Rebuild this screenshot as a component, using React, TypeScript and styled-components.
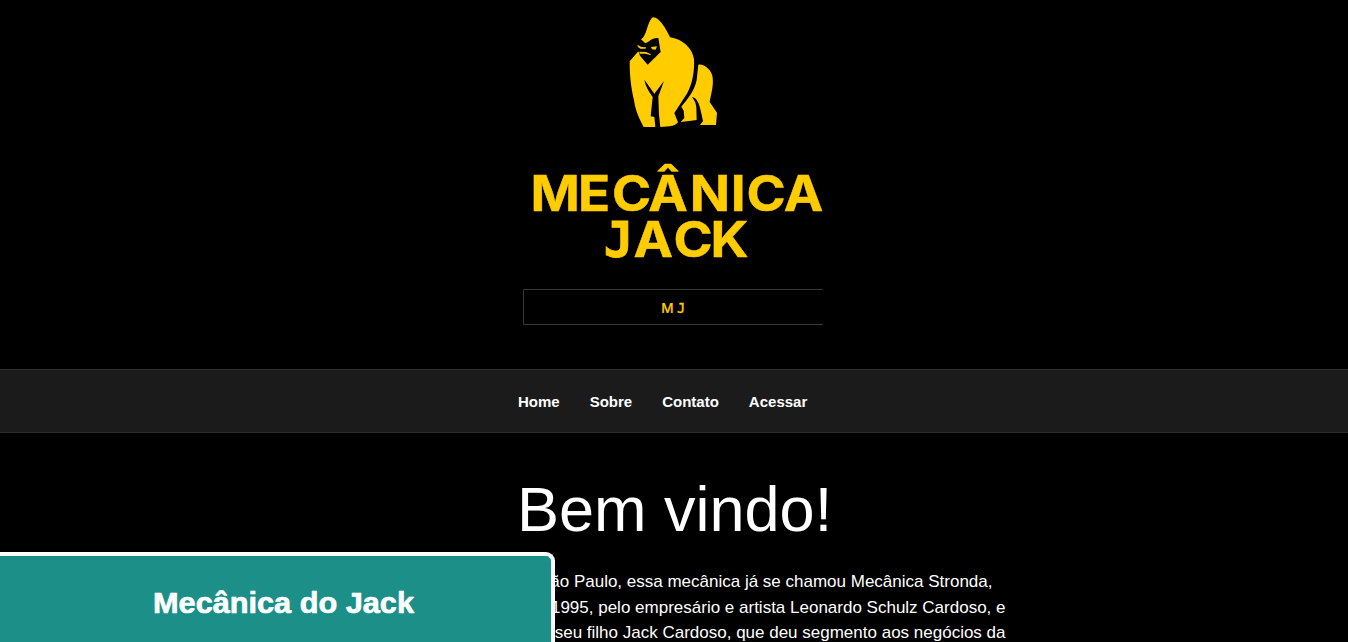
import React from "react";
import styled, { createGlobalStyle } from "styled-components";

const GlobalStyle = createGlobalStyle`
  * { box-sizing: border-box; }
  html, body { margin: 0; background: #000; }
  body {
    height: 642px;
    overflow: hidden;
    color: #fff;
    font-family: "Liberation Sans", Arial, sans-serif;
  }
`;

const Page = styled.div`
  height: 642px;
  overflow: hidden;
  background: #000;
`;

const Header = styled.header`
  display: flex;
  height: 369px;
  padding-left: 523px;
`;

const LogoSvg = styled.svg`
  display: block;
  flex: none;
`;

const LogoText = styled.text`
  font-family: Inter, sans-serif;
  font-size: 49.5px;
  font-weight: 700;
  fill: #ffcc00;
  stroke: #ffcc00;
  stroke-width: 0.5px;
`;

const HookedLetter = styled(LogoText)`
  font-family: "DejaVu Sans Mono", monospace;
  stroke-width: 0.8px;
`;

const TagText = styled.text<{ $hooked?: boolean }>`
  font-family: ${(p) => (p.$hooked ? '"DejaVu Sans Mono", monospace' : "Inter, sans-serif")};
  font-size: 13.5px;
  font-weight: 500;
  fill: #ffcc00;
  stroke: #ffcc00;
  stroke-width: ${(p) => (p.$hooked ? 0.4 : 0.15)}px;
`;

const Nav = styled.nav`
  display: flex;
  align-items: center;
  gap: 30px;
  height: 64px;
  padding-left: 518px;
  background: #1b1b1b;
  border-top: 1px solid #2d2d2d;
  border-bottom: 1px solid #2d2d2d;
`;

const NavLink = styled.a`
  color: #fff;
  font-size: 15px;
  font-weight: 700;
  text-decoration: none;
`;

const Main = styled.main`
  padding: 39px 0 0 517px;
`;

const Title = styled.h1`
  margin: 0;
  font-size: 63px;
  font-weight: 400;
  line-height: 74px;
`;

const Copy = styled.p`
  margin: 23px 0 0 -60px;
  width: 548.5px;
  font-size: 17px;
  line-height: 25.5px;
  white-space: nowrap;
`;

const Line = styled.span<{ $inset?: number }>`
  display: block;
  text-align: right;
  padding-right: ${(p) => p.$inset ?? 0}px;
`;

const Banner = styled.aside`
  position: fixed;
  left: 0;
  bottom: 0;
  width: 555px;
  height: 90px;
  border: 4px solid #fff;
  border-left: 0;
  border-bottom: 0;
  border-top-right-radius: 9px;
  background: #1b8f88;
`;

const BannerText = styled.text`
  font-family: "Liberation Sans", Arial, sans-serif;
  font-size: 30px;
  font-weight: 700;
  fill: #fff;
  stroke: #fff;
  stroke-width: 0.7px;
  stroke-linejoin: round;
`;

const Gorilla = () => (
  <g transform="translate(90 5) scale(0.33333)">
    <path
      fill="#ffcc00"
      d="M117 38Q124 34 135 43C149 55 162 77 171 97C207 102 239 129 243 163C245 198 238 237 223 264L184 324L195 352Q187 362 170 364L142 366L138 329L136 274L153 228L124 266L94 224Q98 248 119 276L113 334L124 336L127 366H92C83 349 68 323 63 286C55 250 50 219 50 169L76 139L81 152L104 179L143 141L136 99Q119 98 105 111L97 115L84 103C102 92 101 56 117 38Z"
    />
    <path
      fill="#ffcc00"
      d="M256 179C273 176 297 195 299 218C302 245 294 265 290 291L312 323L309 360H261L270 348C264 320 260 296 249 282Q243 276 237 277Q248 289 250 307L251 345L229 348L203 351L214 339L212 317L205 305C226 279 244 258 251 225Z"
    />
    <path fill="#ffcc00" d="M73 119L85 126L99 127L98 131L82 131L75 126ZM114 126L132 124L128 134L117 133ZM79 140L99 141L114 148L112 150L96 146L80 146Z" />
  </g>
);

const links = ["Home", "Sobre", "Contato", "Acessar"];

export default function App() {
  return (
    <Page>
      <GlobalStyle />
      <Header>
        <LogoSvg width="300" height="369" viewBox="0 0 300 369" role="img" aria-label="Mecânica Jack">
          <Gorilla />
          <LogoText transform="scale(1.07 1)" x="6.9 51.5 83.2 117.1 155.8 194.2 208.8 243.8" y="211">
            MECÂNICA
          </LogoText>
          <HookedLetter x="80.5" y="257">J</HookedLetter>
          <LogoText transform="scale(1.07 1)" x="103.2 140.7 175.2" y="257">ACK</LogoText>
          <path d="M300 289.5H0.5V324.5H300" fill="none" stroke="#383838" />
          <TagText x="138.2" y="313">M</TagText>
          <TagText $hooked x="154" y="313">J</TagText>
        </LogoSvg>
      </Header>
      <Nav>
        {links.map((label) => (
          <NavLink key={label}>{label}</NavLink>
        ))}
      </Nav>
      <Main>
        <Title>Bem vindo!</Title>
        <Copy>
          <Line $inset={13}>Em São Paulo, essa mecânica já se chamou Mecânica Stronda,</Line>
          <Line>em 1995, pelo empresário e artista Leonardo Schulz Cardoso, e</Line>
          <Line>seu filho Jack Cardoso, que deu segmento aos negócios da</Line>
        </Copy>
      </Main>
      <Banner>
        <LogoSvg width="551" height="86" viewBox="0 0 551 86">
          <BannerText x="153" y="57" textLength="261" lengthAdjust="spacingAndGlyphs">
            Mecânica do Jack
          </BannerText>
        </LogoSvg>
      </Banner>
    </Page>
  );
}
